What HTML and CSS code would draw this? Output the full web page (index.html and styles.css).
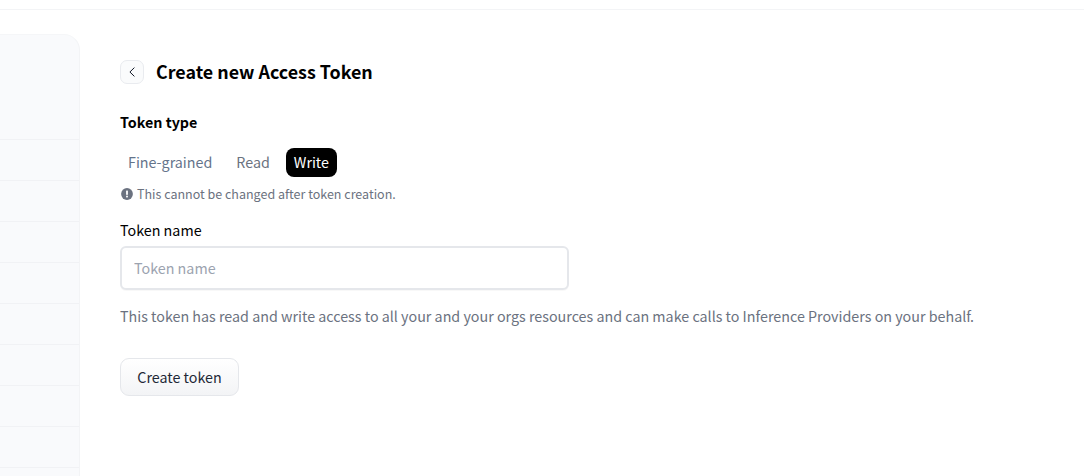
FILE: index.html
```html
<!DOCTYPE html>
<html lang="en">
<head>
<meta charset="utf-8">
<title>Create new Access Token</title>
<link rel="stylesheet" href="styles.css">
</head>
<body>
<div class="topbar"></div>
<div class="page">
  <aside class="sidebar">
    <div class="side-head"></div>
    <div class="side-row"></div>
    <div class="side-row"></div>
    <div class="side-row"></div>
    <div class="side-row"></div>
    <div class="side-row"></div>
    <div class="side-row"></div>
    <div class="side-row"></div>
    <div class="side-row"></div>
    <div class="side-row"></div>
  </aside>
  <main class="content">
    <div class="title-row">
      <a class="back" href="#" aria-label="Back">
        <svg width="12" height="12" viewBox="0 0 12 12" fill="none"><path d="M8.4 1.6 3.9 6l4.5 4.4" stroke="#111827" stroke-width="1"/></svg>
      </a>
      <h1 class="title">Create new Access Token</h1>
    </div>
    <div class="section-label">Token type</div>
    <div class="tabs">
      <span class="tab">Fine-grained</span>
      <span class="tab tab-muted">Read</span>
      <span class="tab tab-active">Write</span>
    </div>
    <p class="note">
      <svg class="note-icon" width="12" height="12" viewBox="0 0 12 12"><circle cx="6" cy="6" r="5.9" fill="#6b7280"/><rect x="5.1" y="2.6" width="1.8" height="4.2" fill="#fff"/><rect x="5.1" y="7.7" width="1.8" height="1.7" fill="#fff"/></svg>
      This cannot be changed after token creation.
    </p>
    <label class="field-label" for="name">Token name</label>
    <input class="input" id="name" type="text" placeholder="Token name">
    <p class="desc">This token has read and write access to all your and your orgs resources and can make calls to Inference Providers on your behalf.</p>
    <button class="btn" type="button">Create token</button>
  </main>
</div>
</body>
</html>
```
FILE: styles.css
```css
* { box-sizing: border-box; }
html, body { margin: 0; height: 476px; overflow: hidden; background: #fff; }
body { font-family: "Noto Sans CJK SC", "Source Sans Pro", sans-serif; font-size: 14.31px; line-height: 24px; color: #000; }
.topbar { height: 10px; border-bottom: 1px solid #f3f4f6; }
.page { display: flex; padding-top: 24px; }
.sidebar { width: 80px; flex: none; overflow: hidden; background: #f9fafc; border-right: 1px solid #f3f4f6; border-top: 1px solid #f5f6f8; border-top-right-radius: 16px; height: 442px; }
.side-head { height: 104px; }
.side-row { height: 41px; border-top: 1px solid #f1f2f5; }
.content { flex: 1; padding: 15px 0 0 40px; }
.title-row { display: flex; align-items: center; gap: 12px; height: 46px; }
.back { width: 24px; height: 24px; display: flex; align-items: center; justify-content: center; border: 1px solid #e9ebef; border-radius: 7px; background: #fafbfc; }
.title { margin: 0 0 2px; font-size: 17.86px; line-height: 28px; font-weight: 700; }
.section-label { margin-top: 15px; font-weight: 700; line-height: 24px; }
.tabs { display: flex; gap: 8px; margin-top: 14px; height: 29px; }
.tab { padding: 0 8px; border-radius: 8px; line-height: 28px; color: #64748b; }
.tab-muted { color: #6b7280; }
.tab-active { background: #000; color: #fff; }
.note { display: flex; align-items: center; gap: 4px; margin: 7px 0 0; font-size: 12.5px; line-height: 20px; color: #6b7280; padding-left: 1px; }
.note-icon { flex: none; }
.field-label { display: block; margin-top: 14px; line-height: 24px; }
.input { display: block; width: 449px; height: 44px; margin-top: 4px; padding: 0 12px 2px; border: 2px solid #e5e7eb; border-radius: 6px; background: #fff; font: inherit; color: #111827; box-shadow: 0 1px 1px rgba(0,0,0,.03); outline: none; }
.input::placeholder { color: #9ca3af; opacity: 1; }
.desc { margin: 14px 0 0; line-height: 24px; color: #6b7280; }
.btn { display: block; width: 119px; height: 38px; margin-top: 30px; padding: 0; border: 1px solid #e5e7eb; border-radius: 9px; background: linear-gradient(#fff, #f3f4f6); font: inherit; color: #1f2937; }
```
